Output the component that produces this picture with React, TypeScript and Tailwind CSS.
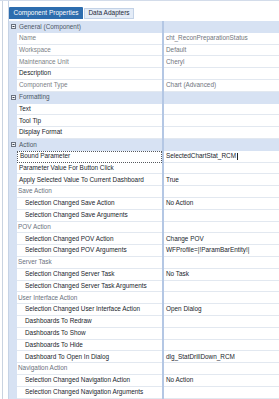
const rows: { kind: 'cat' | 'sub' | 'prop'; label: string; value?: string; tone?: 'ro' | 'dark'; indent?: boolean; focus?: boolean }[] = [
  { kind: 'cat', label: 'General (Component)' },
  { kind: 'prop', label: 'Name', value: 'cht_ReconPreparationStatus', tone: 'ro' },
  { kind: 'prop', label: 'Workspace', value: 'Default', tone: 'ro' },
  { kind: 'prop', label: 'Maintenance Unit', value: 'Cheryl', tone: 'ro' },
  { kind: 'prop', label: 'Description' },
  { kind: 'prop', label: 'Component Type', value: 'Chart (Advanced)', tone: 'ro' },
  { kind: 'cat', label: 'Formatting' },
  { kind: 'prop', label: 'Text' },
  { kind: 'prop', label: 'Tool Tip' },
  { kind: 'prop', label: 'Display Format' },
  { kind: 'cat', label: 'Action' },
  { kind: 'prop', label: 'Bound Parameter', value: 'SelectedChartStat_RCM', focus: true },
  { kind: 'prop', label: 'Parameter Value For Button Click' },
  { kind: 'prop', label: 'Apply Selected Value To Current Dashboard', value: 'True' },
  { kind: 'sub', label: 'Save Action' },
  { kind: 'prop', label: 'Selection Changed Save Action', value: 'No Action', indent: true },
  { kind: 'prop', label: 'Selection Changed Save Arguments', indent: true },
  { kind: 'sub', label: 'POV Action' },
  { kind: 'prop', label: 'Selection Changed POV Action', value: 'Change POV', indent: true },
  { kind: 'prop', label: 'Selection Changed POV Arguments', value: 'WFProfile=|!ParamBarEntity!|', indent: true },
  { kind: 'sub', label: 'Server Task' },
  { kind: 'prop', label: 'Selection Changed Server Task', value: 'No Task', indent: true },
  { kind: 'prop', label: 'Selection Changed Server Task Arguments', indent: true },
  { kind: 'sub', label: 'User Interface Action' },
  { kind: 'prop', label: 'Selection Changed User Interface Action', value: 'Open Dialog', indent: true },
  { kind: 'prop', label: 'Dashboards To Redraw', indent: true },
  { kind: 'prop', label: 'Dashboards To Show', indent: true },
  { kind: 'prop', label: 'Dashboards To Hide', indent: true },
  { kind: 'prop', label: 'Dashboard To Open In Dialog', value: 'dlg_StatDrillDown_RCM', indent: true },
  { kind: 'sub', label: 'Navigation Action' },
  { kind: 'prop', label: 'Selection Changed Navigation Action', value: 'No Action', indent: true },
  { kind: 'prop', label: 'Selection Changed Navigation Arguments', indent: true },
];

function Collapse() {
  return (
    <svg width="5" height="5" viewBox="0 0 5 5">
      <rect x="0.5" y="0.5" width="4" height="4" fill="#f4f6f9" stroke="#6b7380" strokeWidth="1" />
      <line x1="1.5" y1="2.5" x2="3.5" y2="2.5" stroke="#3a4250" strokeWidth="1" />
    </svg>
  );
}

export default function App() {
  return (
    <div className="w-[279px] h-[399px] overflow-hidden bg-white flex font-['Liberation_Sans',Arial,sans-serif] text-[6.4px] leading-none border-t border-[#d3dcea]">
      <div className="w-[2px]" />
      <div className="w-px bg-[#c9d3e0]" />
      <div className="w-[5px]" />
      <div className="flex-1 flex flex-col border-l border-[#c6d3e5] min-w-0">
        {/* Tabs */}
        <div className="flex items-end h-[12px] mt-[6px] mb-[2px]">
          <div className="w-[74px] h-[12px] bg-[#2d6dae] text-white text-[6.5px] flex items-center justify-center rounded-t-[1px]">
            Component Properties
          </div>
          <div className="w-[50px] h-[11px] ml-px bg-[#e4ecf7] border border-[#c3d2e6] text-[#1f2a38] text-[6.5px] flex items-center justify-center">
            Data Adapters
          </div>
        </div>

        {/* Property grid */}
        <div className="flex flex-col">
          {rows.map((r, i) => {
            if (r.kind === 'cat') {
              return (
                <div key={i} className="flex h-[11.8px] bg-[#d7e2f3] text-[#4d5866]">
                  <div className="w-[8px] flex items-center justify-center">
                    <Collapse />
                  </div>
                  <div className="w-[145px] flex items-center pl-[2px] whitespace-nowrap">{r.label}</div>
                  <div className="w-[2px] bg-[#b4c7e4]" />
                  <div className="flex-1" />
                </div>
              );
            }
            if (r.kind === 'sub') {
              return (
                <div key={i} className="flex h-[11.8px]">
                  <div className="w-[8px] bg-[#d7e2f3]" />
                  <div className="w-[145px] flex items-center pl-[1px] text-[#6a7280] border-b border-[#e2e8f0] whitespace-nowrap">{r.label}</div>
                  <div className="w-[2px] bg-[#b4c7e4]" />
                  <div className="flex-1 border-b border-[#e2e8f0]" />
                </div>
              );
            }
            const labelColor = r.tone === 'ro' ? 'text-[#7b7f86]' : 'text-[#20252c]';
            const valueColor = r.tone === 'ro' ? 'text-[#70757d]' : 'text-[#20252c]';
            return (
              <div key={i} className="flex h-[11.8px]">
                <div className="w-[8px] bg-[#d7e2f3]" />
                <div
                  className={`w-[145px] flex items-center overflow-hidden whitespace-nowrap ${labelColor} ${r.indent ? 'pl-[8px]' : 'pl-[2px]'} ${
                    r.focus ? 'border border-dotted border-[#55595f]' : 'border-b border-[#e2e8f0]'
                  }`}
                >
                  {r.label}
                </div>
                <div className="w-[2px] bg-[#b4c7e4]" />
                <div className={`flex-1 flex items-center pl-[2px] whitespace-nowrap border-b border-[#e2e8f0] ${valueColor}`}>
                  {r.value}
                  {r.focus && <span className="ml-px w-px h-[7px] bg-[#222]" />}
                </div>
              </div>
            );
          })}
        </div>
      </div>
    </div>
  );
}
